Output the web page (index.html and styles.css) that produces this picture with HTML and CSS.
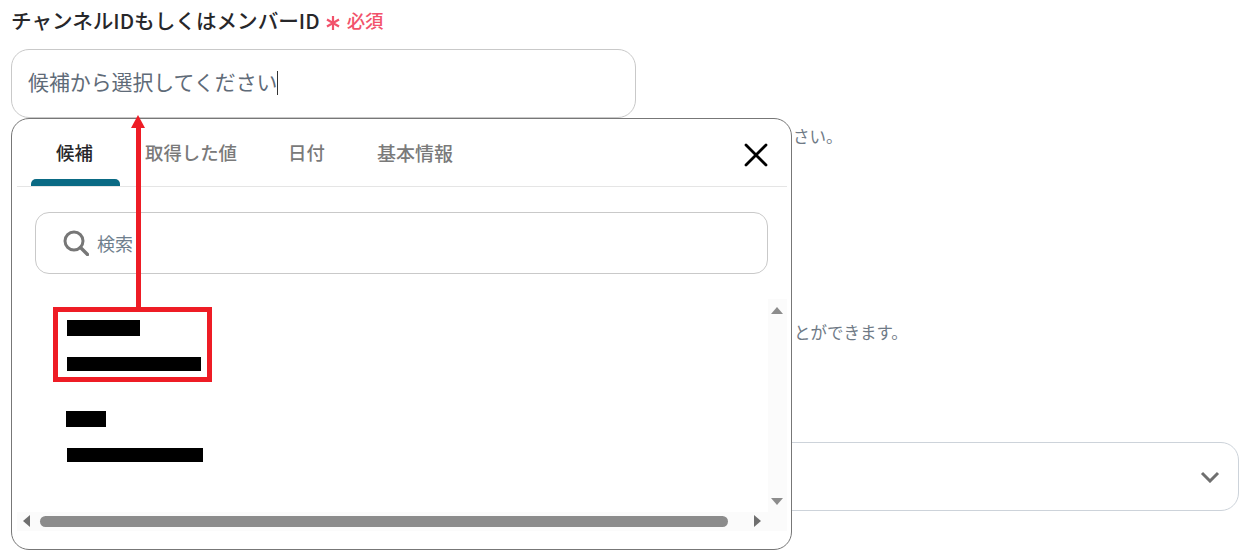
FILE: index.html
```html
<!DOCTYPE html>
<html lang="ja">
<head>
  <meta charset="UTF-8" />
  <title>チャンネルIDもしくはメンバーID</title>
  <link rel="stylesheet" href="styles.css">
</head>
<body>

  <div class="page">
    <div class="field-label">
      <span>チャンネルIDもしくはメンバーID</span>
      <span class="required">
        <svg class="star" width="16" height="16" viewBox="0 0 16 16">
          <path d="M8 1v14M2 4.5l12 7M14 4.5l-12 7" fill="none" stroke="#f2526b" stroke-width="2.2"/>
        </svg>
        必須
      </span>
    </div>
    <div class="text-input">候補から選択してください<span class="caret"></span></div>
    <div class="hint hint-first">さい。</div>
    <div class="hint hint-second">とができます。</div>
    <div class="select-box">
      <svg class="chevron" width="20" height="12" viewBox="0 0 20 12">
        <path d="M2 2l8 8 8-8" fill="none" stroke="#6f6f6f" stroke-width="3"/>
      </svg>
    </div>
  </div>

  <div class="popup">
    <div class="tabs">
      <div class="tab tab-active">候補</div>
      <div class="tab tab-values">取得した値</div>
      <div class="tab tab-date">日付</div>
      <div class="tab tab-info">基本情報</div>
      <svg class="close" width="24" height="24" viewBox="0 0 24 24">
        <path d="M2 2l20 20M22 2L2 22" stroke="#000" stroke-width="2.8" stroke-linecap="round"/>
      </svg>
    </div>

    <div class="search">
      <svg width="26" height="26" viewBox="0 0 26 26">
        <circle cx="11" cy="11" r="9" fill="none" stroke="#777" stroke-width="3"/>
        <path d="M17.5 17.5l7 7" stroke="#777" stroke-width="3.4" stroke-linecap="round"/>
      </svg>
      <span>検索</span>
    </div>

    <div class="list">
      <div class="list-body">
        <div class="item item-first">
          <div class="redact redact-a"></div>
          <div class="redact redact-b"></div>
        </div>
        <div class="item item-second">
          <div class="redact redact-c"></div>
          <div class="redact redact-d"></div>
        </div>
      </div>
      <div class="vscroll">
        <div class="tri tri-up"></div>
        <div class="tri tri-down"></div>
      </div>
    </div>

    <div class="hscroll">
      <div class="tri tri-left"></div>
      <div class="thumb"></div>
      <div class="tri tri-right"></div>
    </div>
  </div>

  <!-- red annotation on top of the screenshot -->
  <div class="mark-box"></div>
  <div class="mark-line"></div>
  <div class="mark-head"></div>

</body>
</html>
```

FILE: styles.css
```css
html, body {
  margin: 0;
  padding: 0;
  height: 100%;
  background: #fff;
  font-family: "Noto Sans CJK JP", "Noto Sans", sans-serif;
  overflow: hidden;
}
.page {
  padding: 5px 7px 0 11px;
}
.field-label {
  display: flex;
  align-items: center;
  height: 29px;
  font-size: 20.6px;
  font-weight: 500;
  color: #27272a;
}
.required {
  display: flex;
  align-items: center;
  gap: 6px;
  margin-left: 5px;
  font-size: 18.4px;
  color: #f2526b;
}
.star {
  margin-top: 7px;
}
.text-input {
  display: flex;
  align-items: center;
  box-sizing: border-box;
  width: 625px;
  height: 69px;
  margin-top: 15px;
  padding: 0 0 5px 16px;
  border: 1px solid #c9c9c9;
  border-radius: 18px;
  font-size: 20.9px;
  color: #5f6b78;
}
.caret {
  width: 1px;
  height: 24px;
  margin-top: 4px;
  background: #333;
}
.hint {
  padding-left: 782px;
  font-size: 16.5px;
  line-height: 22px;
  color: #6f7a86;
}
.hint-first {
  margin-top: 7px;
}
.hint-second {
  margin-top: 174px;
  padding-left: 783px;
}
.select-box {
  display: flex;
  align-items: center;
  justify-content: flex-end;
  box-sizing: border-box;
  height: 69px;
  margin-top: 99px;
  padding-right: 18px;
  border: 1px solid #cdd3da;
  border-radius: 18px;
}
.popup {
  position: absolute;
  left: 11px;
  top: 118px;
  box-sizing: border-box;
  width: 781px;
  height: 432px;
  padding: 0 4px 18px 5px;
  display: flex;
  flex-direction: column;
  background: #fff;
  border: 1px solid #777;
  border-radius: 18px;
}
.tabs {
  position: relative;
  height: 67px;
  flex: none;
  border-bottom: 1px solid #e5e5e5;
}
.tab {
  position: absolute;
  top: 20px;
  font-size: 18.4px;
  line-height: 27px;
  font-weight: 500;
  color: #7a7a7a;
}
.tab-active {
  left: 13px;
  top: 0;
  width: 89px;
  height: 67px;
  padding-top: 20px;
  box-sizing: border-box;
  text-align: center;
  color: #27272a;
}
.tab-active::after {
  content: "";
  position: absolute;
  left: 1px;
  right: -1px;
  bottom: 0;
  height: 7px;
  background: #0a6a84;
  border-radius: 5px 5px 0 0;
}
.tab-values {
  left: 128px;
}
.tab-date {
  left: 271px;
}
.tab-info {
  left: 360px;
  font-size: 19px;
}
.close {
  position: absolute;
  right: 19px;
  top: 24px;
}
.search {
  display: flex;
  align-items: center;
  gap: 8px;
  flex: none;
  box-sizing: border-box;
  width: 733px;
  height: 62px;
  margin: 25px 0 25px 18px;
  padding-left: 27px;
  border: 1px solid #c9c9c9;
  border-radius: 14px;
  font-size: 18px;
  color: #6f7f8e;
}
.list {
  flex: 1;
  display: flex;
  min-height: 0;
}
.list-body {
  flex: 1;
  position: relative;
}
.item {
  display: flex;
  flex-direction: column;
  padding-left: 50px;
}
.item-first {
  padding-top: 21px;
  gap: 21px;
}
.item-second {
  padding-top: 40px;
  gap: 21px;
}
.redact {
  background: #000;
}
.redact-a {
  width: 73px;
  height: 16px;
}
.redact-b {
  width: 134px;
  height: 14px;
}
.redact-c {
  width: 40px;
  height: 16px;
  margin-left: -1px;
}
.redact-d {
  width: 136px;
  height: 14px;
}
.vscroll {
  position: relative;
  width: 19px;
  background: #fbfbfb;
}
.hscroll {
  position: relative;
  flex: none;
  height: 19px;
  background: #fbfbfb;
}
.thumb {
  position: absolute;
  left: 23px;
  top: 4px;
  width: 688px;
  height: 11px;
  border-radius: 6px;
  background: #8c8c8c;
}
.tri {
  position: absolute;
  width: 0;
  height: 0;
  border-style: solid;
  border-color: transparent;
}
.tri-up {
  left: 3px;
  top: 8px;
  border-width: 0 6.5px 7px;
  border-bottom-color: #8c8c8c;
}
.tri-down {
  left: 3px;
  bottom: 7px;
  border-width: 7px 6.5px 0;
  border-top-color: #8c8c8c;
}
.tri-left {
  left: 6px;
  top: 3px;
  border-width: 6.5px 7px 6.5px 0;
  border-right-color: #6f6f6f;
}
.tri-right {
  right: 26px;
  top: 3px;
  border-width: 6.5px 0 6.5px 7px;
  border-left-color: #6f6f6f;
}
.mark-box {
  position: absolute;
  left: 53px;
  top: 307px;
  box-sizing: border-box;
  width: 159px;
  height: 75px;
  border: 5px solid #ee1c25;
}
.mark-line {
  position: absolute;
  left: 136px;
  top: 127px;
  width: 5px;
  height: 181px;
  background: #ee1c25;
}
.mark-head {
  position: absolute;
  left: 131px;
  top: 115px;
  width: 0;
  height: 0;
  border-style: solid;
  border-width: 0 7.5px 13px;
  border-color: transparent transparent #ee1c25;
}
```
